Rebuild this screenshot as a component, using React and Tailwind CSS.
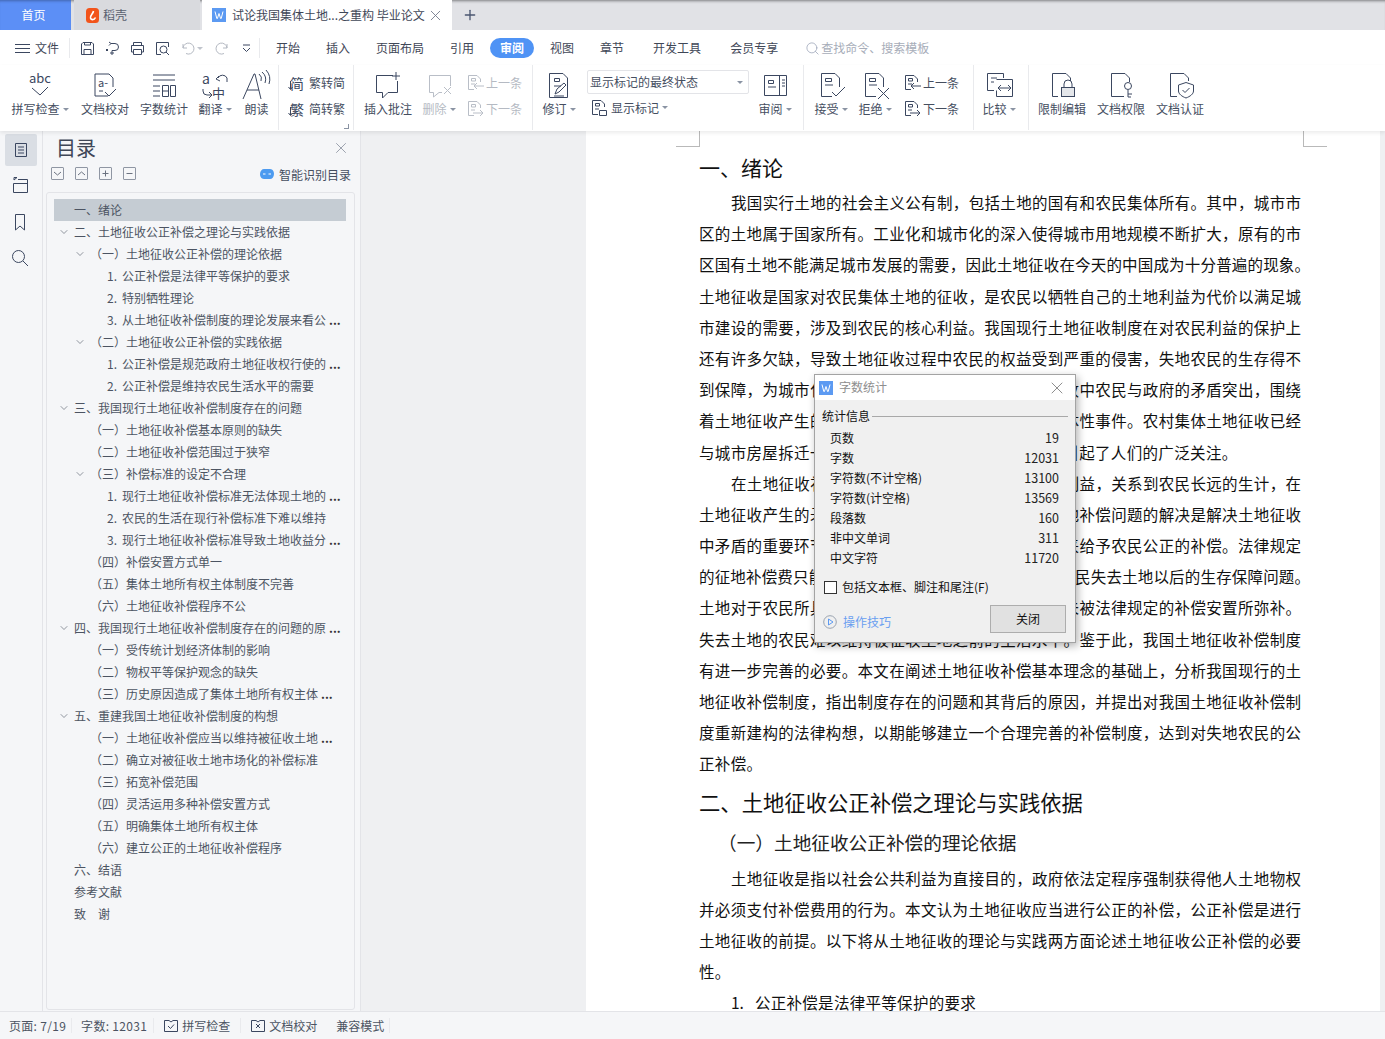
import { ChevronDown, X, Plus, Search } from "lucide-react";

const Svg = ({ w = 32, h = 32, className = "", children }) => (
  <svg width={w} height={h} viewBox={`0 0 ${w} ${h}`} fill="none" stroke="currentColor" strokeWidth="1" className={className}>
    {children}
  </svg>
);

const Caret = () => <span className="inline-block ml-[3px] mb-[2px] border-x-[3px] border-t-[3px] border-x-transparent border-t-[#8a93a3] align-middle" />;

const icons = {
  spell: (
    <Svg>
      <text x="16" y="14" textAnchor="middle" fontSize="13" fill="currentColor" stroke="none">abc</text>
      <path d="M8 19L16 26L24 18" />
    </Svg>
  ),
  proof: (
    <Svg>
      <path d="M19 27H6V5H20L24 9V18" />
      <text x="9" y="18" fontSize="11" fill="currentColor" stroke="none">a-</text>
      <path d="M10 22H14M16 23L20 27L27 20" />
    </Svg>
  ),
  count: (
    <Svg>
      <path d="M5 6H27M5 11H27M5 17H12M5 22H12M5 27H12" />
      <path d="M14.5 16.5H20.5V27.5H14.5ZM22.5 16.5H27.5V27.5H22.5ZM14.5 22H20.5" />
    </Svg>
  ),
  translate: (
    <Svg>
      <text x="3" y="15" fontSize="14" fill="currentColor" stroke="none">a</text>
      <text x="13" y="29" fontSize="13" fill="currentColor" stroke="none">中</text>
      <path d="M19 9A5 5 0 0 1 28 9V13M17 10L20 7M17 10L21 12" />
      <path d="M4 20V22A4 4 0 0 0 8 26H13M10 23L13 26L10 29" />
    </Svg>
  ),
  read: (
    <Svg>
      <path d="M2 30L13 5H14L20 30M6 21H18" />
      <path d="M18 5A6 6 0 0 1 20 12M21 3A10 10 0 0 1 24 14M25 1A14 14 0 0 1 28 15" />
    </Svg>
  ),
  comment: (
    <Svg>
      <path d="M21 6.5H4.5V23.5H10.5V29L16 23.5H25.5V12" />
      <path d="M24 3V11M20 7H28" />
    </Svg>
  ),
  del: (
    <Svg>
      <path d="M27.5 17V6.5H6.5V23.5H10.5V28L16 23.5H19" />
      <path d="M21 18L28 25M28 18L21 25" />
    </Svg>
  ),
  track: (
    <Svg>
      <path d="M24.5 28.5H6.5V4.5H20L24.5 9V28.5" />
      <path d="M11.5 9.5H16.5V12.5H11.5ZM11 17H18" />
      <path d="M12 25L14 20L21 14L23 16L16 23L12 25M11 27H21" />
    </Svg>
  ),
  review: (
    <Svg>
      <path d="M5.5 6.5H27.5V26.5H5.5ZM20.5 6.5V26.5" />
      <path d="M9.5 11.5H14.5V14.5H9.5ZM9 18H17M23 11H26M23 14H26M23 17H26" />
    </Svg>
  ),
  accept: (
    <Svg>
      <path d="M17 27.5H6.5V4.5H20L24.5 9V18" />
      <path d="M10.5 9.5H16.5V12.5H10.5ZM10 16H18" />
      <path d="M17 23L21 27L30 18" />
    </Svg>
  ),
  reject: (
    <Svg>
      <path d="M17 27.5H6.5V4.5H20L24.5 9V18" />
      <path d="M10.5 9.5H16.5V12.5H10.5ZM10 16H18" />
      <path d="M19 19L30 30M30 19L19 30" />
    </Svg>
  ),
  compare: (
    <Svg>
      <path d="M20.5 9V4.5H4.5V21.5H11M13.5 10.5H29.5V27.5H13.5V21.5" />
      <path d="M8 9H14M8 13H11" />
      <path d="M15 19H28M18 16L15 19L18 22M25 16L28 19L25 22" />
    </Svg>
  ),
  lock: (
    <Svg>
      <path d="M12 27.5H6.5V4.5H20L24.5 9V12" />
      <rect x="15.5" y="18.5" width="13" height="9" fill="#e4e6ea" />
      <path d="M18 18V15A4 4 0 0 1 26 15V18" />
    </Svg>
  ),
  key: (
    <Svg>
      <path d="M19 27.5H6.5V4.5H20L24.5 9V13" />
      <circle cx="23" cy="17" r="3.5" />
      <path d="M23 21V28M23 25H27M23 28H26" />
    </Svg>
  ),
  shield: (
    <Svg>
      <path d="M13 27.5H6.5V4.5H20L24.5 9V12" />
      <path d="M14.5 16L22 13.5L29.5 16V22C29.5 25 26 27.5 22 29C18 27.5 14.5 25 14.5 22Z" />
      <path d="M18.5 21L21 23.5L25.5 19" />
    </Svg>
  ),
};

const SmallDoc = ({ dir, mark = true }) => (
  <Svg w={18} h={18}>
    <path d="M7 15.5H1.5V1.5H10L13.5 5V8" />
    {mark && <path d="M4.5 4.5H8.5V7H4.5ZM4 10H8" />}
    {dir === "up" && <path d="M17 12H7M10 9L7 12L10 15" />}
    {dir === "down" && <path d="M6 13H16M13 10L16 13L13 16" />}
    {dir === "none" && <path d="M8.5 11.5H15.5V16.5H8.5Z" />}
  </Svg>
);

const RibbonBtn = ({ icon, label, caret, width, muted }) => (
  <div className={`flex flex-col items-center shrink-0 ${width} ${muted ? "text-[#b9bec7]" : "text-[#3b4760]"}`}>
    <div className="h-[36px] pt-[4px] flex justify-center">{icons[icon]}</div>
    <div className={`h-[16px] leading-[16px] text-[12px] whitespace-nowrap ${muted ? "text-[#b5bac3]" : "text-[#454e5f]"}`}>
      {label}
      {caret && <Caret />}
    </div>
  </div>
);

const StackBtn = ({ dir, label, muted }) => (
  <div className={`flex items-center h-[18px] text-[12px] ${muted ? "text-[#b9bec7]" : "text-[#3b4760]"}`}>
    <SmallDoc dir={dir} />
    <span className={`ml-[1px] ${muted ? "text-[#b5bac3]" : "text-[#454e5f]"}`}>{label}</span>
  </div>
);

const Sep = ({ className = "" }) => <div className={`w-px bg-[#e9eaed] self-stretch shrink-0 ${className}`} />;

function TabBar() {
  return (
    <div className="flex h-[30px] bg-[#e1e2e6] shadow-[inset_0_3px_3px_-2px_rgba(0,0,0,0.45)] text-[12px]">
      <div className="w-[71px] bg-[#5c8ff6] text-white flex items-center justify-center pr-[4px] shadow-[inset_0_3px_3px_-2px_rgba(0,0,0,0.3)]">首页</div>
      <div className="ml-[3px] w-[126px] bg-[#d9dade] flex items-center pl-[12px] text-[#5a6170]">
        <svg width="13" height="15" viewBox="0 0 13 15">
          <rect width="13" height="15" rx="3.5" fill="#f2541b" />
          <path d="M7.5 3C7 6 4 7 4.5 10C5 12 8 12.5 9.5 9.5" fill="none" stroke="#fff" strokeWidth="1.6" />
        </svg>
        <span className="ml-[4px]">稻壳</span>
      </div>
      <div className="ml-[2px] w-[250px] bg-white flex items-center pl-[10px]">
        <div className="w-[14px] h-[14px] bg-[#5c9af2] text-white flex items-center justify-center">
          <svg width="10" height="10" viewBox="0 0 10 10" fill="none" stroke="#fff" strokeWidth="1">
            <path d="M1 1.5L2.8 8.5H3.4L5 3.5L6.6 8.5H7.2L9 1.5" />
          </svg>
        </div>
        <span className="ml-[6px] text-[#3f4757] whitespace-nowrap">试论我国集体土地...之重构 毕业论文</span>
        <X size={17} strokeWidth={1.2} className="ml-[2px] text-[#6b7486]" />
      </div>
      <Plus size={16} strokeWidth={2} className="ml-[10px] mt-[7px] text-[#4a5670]" />
    </div>
  );
}

function MenuBar() {
  const gray = "text-[#b4b9c2]";
  return (
    <div className="flex items-center h-[35px] bg-white text-[12px] text-[#3f4757] pt-[1px]">
      <div className="ml-[15px] w-[15px] flex flex-col gap-[3px]">
        <span className="h-px bg-[#3b4760]" />
        <span className="h-px bg-[#3b4760]" />
        <span className="h-px bg-[#3b4760]" />
      </div>
      <span className="ml-[5px]">文件</span>
      <Sep className="ml-[10px] my-[7px]" />
      <div className="flex items-center ml-[10px] text-[#3b4760]">
        <Svg w={15} h={15}>
          <path d="M1.5 3L3 1.5H12L13.5 3V13.5H1.5ZM4 13.5V8.5H11V13.5M4.5 1.5V4H10.5V1.5" />
        </Svg>
        <Svg w={15} h={15} className="ml-[10px]">
          <path d="M6 2.5H10A3.5 3.5 0 0 1 10 9.5H7V14M4 1L6 2.5L4 4.5M1 8L3 10M3 8L1 10M5 12H9" />
        </Svg>
        <Svg w={15} h={15} className="ml-[10px]">
          <path d="M3.5 4.5V1.5H11.5V4.5M3.5 11H1.5V4.5H13.5V11H11.5M3.5 8.5H11.5V13.5H3.5Z" />
        </Svg>
        <Svg w={15} h={15} className="ml-[10px]">
          <path d="M6 13.5H1.5V1.5H13.5V6" />
          <circle cx="8.5" cy="8.5" r="3.5" />
          <path d="M11 11L14 14" />
        </Svg>
        <Svg w={13} h={13} className={`ml-[12px] ${gray}`}>
          <path d="M1 2V6H5M1 6A5.5 5.5 0 1 1 4 11.5" />
        </Svg>
        <span className="ml-[2px] mt-[1px] border-x-[3px] border-t-[3px] border-x-transparent border-t-[#c0c4cc]" />
        <Svg w={13} h={13} className={`ml-[12px] ${gray}`}>
          <path d="M12 2V6H8M12 6A5.5 5.5 0 1 0 9 11.5" />
        </Svg>
        <Svg w={9} h={9} className="ml-[14px]">
          <path d="M1 1H8M1 4L4.5 7.5L8 4" />
        </Svg>
      </div>
      <Sep className="ml-[8px] my-[7px]" />
      <span className="ml-[16px]">开始</span>
      <span className="ml-[26px]">插入</span>
      <span className="ml-[26px]">页面布局</span>
      <span className="ml-[26px]">引用</span>
      <span className="ml-[16px] w-[44px] h-[20px] rounded-full bg-[#4f93f5] text-white font-bold flex items-center justify-center">审阅</span>
      <span className="ml-[16px]">视图</span>
      <span className="ml-[26px]">章节</span>
      <span className="ml-[29px]">开发工具</span>
      <span className="ml-[29px]">会员专享</span>
      <Search size={15} strokeWidth={1.2} className="ml-[27px] text-[#98a2b5]" />
      <span className="ml-[1px] text-[#a7adb9]">查找命令、搜索模板</span>
    </div>
  );
}

// small character glyph with its little conversion arrow
const ConvertGlyph = ({ char }) => (
  <span className="relative w-[16px] h-[18px] text-[14px] leading-[18px] text-[#3b4760] text-right">
    {char}
    <svg width="5" height="10" viewBox="0 0 5 10" fill="none" stroke="currentColor" className="absolute left-0 bottom-[1px]">
      <path d="M2.5 0V8M0.5 6L2.5 8.5L4.5 6" />
    </svg>
  </span>
);

function Ribbon() {
  return (
    <div className="relative z-10 flex h-[66px] bg-white pl-[12px] pb-[1px] shadow-[0_2px_4px_rgba(0,0,0,0.08)]">
      <RibbonBtn icon="spell" label="拼写检查" caret width="w-[56px]" />
      <RibbonBtn icon="proof" label="文档校对" width="w-[48px] ml-[13px]" />
      <RibbonBtn icon="count" label="字数统计" width="w-[48px] ml-[11px]" />
      <RibbonBtn icon="translate" label="翻译" caret width="w-[32px] ml-[11px]" />
      <RibbonBtn icon="read" label="朗读" width="w-[23px] ml-[14px]" />
      <Sep className="ml-[10px]" />

      <div className="relative w-[74px] shrink-0 pl-[9px] pt-[9px] text-[12px] text-[#454e5f]">
        <div className="flex items-center h-[18px]">
          <ConvertGlyph char="简" />
          <span className="ml-[5px]">繁转简</span>
        </div>
        <div className="flex items-center h-[18px] mt-[8px]">
          <ConvertGlyph char="繁" />
          <span className="ml-[5px]">简转繁</span>
        </div>
        <span className="absolute right-[4px] bottom-[1px] w-[5px] h-[5px] border-r border-b border-[#8a93a3]" />
      </div>
      <Sep />

      <RibbonBtn icon="comment" label="插入批注" width="w-[48px] ml-[10px]" />
      <RibbonBtn icon="del" label="删除" caret muted width="w-[32px] ml-[11px]" />
      <div className="ml-[12px] pt-[9px] w-[65px] shrink-0 flex flex-col gap-[8px]">
        <StackBtn dir="up" label="上一条" muted />
        <StackBtn dir="down" label="下一条" muted />
      </div>
      <Sep />

      <RibbonBtn icon="track" label="修订" caret width="w-[32px] ml-[10px]" />
      <div className="ml-[12px] w-[162px] shrink-0 pt-[5px]">
        <div className="h-[24px] border border-[#e3e4e8] rounded-[2px] flex items-center justify-between pl-[2px] pr-[5px] text-[12px] text-[#454e5f]">
          显示标记的最终状态
          <span className="border-x-[3px] border-t-[3px] border-x-transparent border-t-[#8a93a3]" />
        </div>
        <div className="flex items-center mt-[5px] h-[18px] pl-[4px] text-[12px] text-[#454e5f]">
          <span className="text-[#3b4760]"><SmallDoc dir="none" /></span>
          <span className="ml-[2px]">显示标记</span>
          <Caret />
        </div>
      </div>
      <RibbonBtn icon="review" label="审阅" caret width="w-[32px] ml-[10px]" />
      <Sep className="ml-[12px]" />

      <RibbonBtn icon="accept" label="接受" caret width="w-[32px] ml-[11px]" />
      <RibbonBtn icon="reject" label="拒绝" caret width="w-[32px] ml-[12px]" />
      <div className="ml-[13px] pt-[9px] w-[69px] shrink-0 flex flex-col gap-[8px]">
        <StackBtn dir="up" label="上一条" />
        <StackBtn dir="down" label="下一条" />
      </div>
      <Sep />

      <RibbonBtn icon="compare" label="比较" caret width="w-[32px] ml-[9px]" />
      <Sep className="ml-[13px]" />
      <RibbonBtn icon="lock" label="限制编辑" width="w-[48px] ml-[9px]" />
      <RibbonBtn icon="key" label="文档权限" width="w-[48px] ml-[11px]" />
      <RibbonBtn icon="shield" label="文档认证" width="w-[48px] ml-[11px]" />
    </div>
  );
}

function Rail() {
  return (
    <div className="w-[43px] shrink-0 border-r border-[#e3e4e8] text-[#3b4760] flex flex-col pt-[3px] pl-[5px]">
      <div className="w-[32px] h-[32px] bg-[#dadee4] rounded-[2px] flex items-center justify-center">
        <Svg w={16} h={16}>
          <path d="M2.5 1.5H13.5V14.5H2.5ZM5 5H11M5 8H11M5 11H11" />
        </Svg>
      </div>
      <Svg w={20} h={20} className="ml-[5px] mt-[9px]">
        <path d="M4 2.5V5L7 2.5ZM8 4.5H17.5V17.5H3.5V8.5H17.5" />
      </Svg>
      <Svg w={20} h={20} className="ml-[5px] mt-[17px]">
        <path d="M5.5 2.5H14.5V18L10 14L5.5 18Z" />
      </Svg>
      <Svg w={20} h={20} className="ml-[5px] mt-[16px]">
        <circle cx="8.5" cy="8.5" r="6" />
        <path d="M13 13L18 18" />
      </Svg>
    </div>
  );
}

const outline = [
  [1, 0, "一、绪论"],
  [1, 1, "二、土地征收公正补偿之理论与实践依据"],
  [2, 1, "（一）土地征收公正补偿的理论依据"],
  [3, 0, "1. 公正补偿是法律平等保护的要求"],
  [3, 0, "2. 特别牺牲理论"],
  [3, 0, "3. 从土地征收补偿制度的理论发展来看公 ..."],
  [2, 1, "（二）土地征收公正补偿的实践依据"],
  [3, 0, "1. 公正补偿是规范政府土地征收权行使的 ..."],
  [3, 0, "2. 公正补偿是维持农民生活水平的需要"],
  [1, 1, "三、我国现行土地征收补偿制度存在的问题"],
  [2, 0, "（一）土地征收补偿基本原则的缺失"],
  [2, 0, "（二）土地征收补偿范围过于狭窄"],
  [2, 1, "（三）补偿标准的设定不合理"],
  [3, 0, "1. 现行土地征收补偿标准无法体现土地的 ..."],
  [3, 0, "2. 农民的生活在现行补偿标准下难以维持"],
  [3, 0, "3. 现行土地征收补偿标准导致土地收益分 ..."],
  [2, 0, "（四）补偿安置方式单一"],
  [2, 0, "（五）集体土地所有权主体制度不完善"],
  [2, 0, "（六）土地征收补偿程序不公"],
  [1, 1, "四、我国现行土地征收补偿制度存在的问题的原 ..."],
  [2, 0, "（一）受传统计划经济体制的影响"],
  [2, 0, "（二）物权平等保护观念的缺失"],
  [2, 0, "（三）历史原因造成了集体土地所有权主体 ..."],
  [1, 1, "五、重建我国土地征收补偿制度的构想"],
  [2, 0, "（一）土地征收补偿应当以维持被征收土地 ..."],
  [2, 0, "（二）确立对被征收土地市场化的补偿标准"],
  [2, 0, "（三）拓宽补偿范围"],
  [2, 0, "（四）灵活运用多种补偿安置方式"],
  [2, 0, "（五）明确集体土地所有权主体"],
  [2, 0, "（六）建立公正的土地征收补偿程序"],
  [1, 0, "六、结语"],
  [1, 0, "参考文献"],
  [1, 0, "致\u3000谢"],
];

const levelPad = { 1: "pl-[4px]", 2: "pl-[20px]", 3: "pl-[53px]" };

function OutlineText({ level, text }) {
  const cut = text.endsWith(" ...");
  const body = cut ? text.slice(0, -4) : text;
  return (
    <>
      {level === 3 ? (
        <>
          <span className="w-[15px]">{body.slice(0, 2)}</span>
          <span>{body.slice(3)}</span>
        </>
      ) : (
        <span>{body}</span>
      )}
      {cut && <span className="ml-[3px] font-bold text-[#333]">...</span>}
    </>
  );
}

function OutlinePanel() {
  return (
    <div className="w-[318px] shrink-0 border-r border-[#e3e4e8] flex flex-col pl-[3px] pr-[5px]">
      <div className="flex items-center h-[28px] pl-[10px] pr-[5px] pt-[6px] justify-between">
        <span className="text-[20px] text-[#3f4757]">目录</span>
        <X size={18} strokeWidth={1} className="text-[#7d8696]" />
      </div>
      <div className="flex items-start h-[33px] pl-[5px] pr-[4px] pt-[8px] text-[12px] text-[#454e5f]">
        {["down", "up", "plus", "minus"].map((k) => (
          <span key={k} className="w-[13px] h-[13px] mr-[11px] border border-[#8f96a3] rounded-[1px]">
            <Svg w={11} h={11} className="text-[#6b7280]">
              {k === "down" && <path d="M2 4L5.5 7L9 4" />}
              {k === "up" && <path d="M2 7L5.5 4L9 7" />}
              {k === "plus" && <path d="M2.5 5.5H8.5M5.5 2.5V8.5" />}
              {k === "minus" && <path d="M2.5 5.5H8.5" />}
            </Svg>
          </span>
        ))}
        <svg width="14" height="12" viewBox="0 0 14 12" className="ml-auto mt-[1px]">
          <path d="M4 1H10C13 1 14 4 14 6C14 9 12 11 10 11H4C1 11 0 8 0 6C0 3 2 1 4 1Z" fill="#4d9bf0" />
          <path d="M3 6H5.5M8.5 6H11" stroke="#fff" strokeWidth="1" />
        </svg>
        <span className="ml-[5px] -mt-[1px]">智能识别目录</span>
      </div>
      <div className="flex-1 min-h-0 border border-[#e3e4e8] rounded-[3px] pl-[7px] pr-[8px] pt-[6px] mb-[1px] text-[12px] text-[#4c5462]">
        {outline.map(([level, open, text], i) => (
          <div key={i} className={`flex items-center h-[22px] whitespace-nowrap ${levelPad[level]} ${i === 0 ? "bg-[#c5ccd3]" : ""}`}>
            {level < 3 && (
              <span className="w-[12px] mr-[4px] flex justify-center">
                {open === 1 && <ChevronDown size={12} strokeWidth={1.2} className="text-[#4c5462]" />}
              </span>
            )}
            <OutlineText level={level} text={text} />
          </div>
        ))}
      </div>
    </div>
  );
}

const intro = [
  ["我国实行土地的社会主义公有制，包括土地的国有和农民集体所有。其中，城市市", "i"],
  ["区的土地属于国家所有。工业化和城市化的深入使得城市用地规模不断扩大，原有的市"],
  ["区国有土地不能满足城市发展的需要，因此土地征收在今天的中国成为十分普遍的现象。", "h"],
  ["土地征收是国家对农民集体土地的征收，是农民以牺牲自己的土地利益为代价以满足城"],
  ["市建设的需要，涉及到农民的核心利益。我国现行土地征收制度在对农民利益的保护上"],
  ["还有许多欠缺，导致土地征收过程中农民的权益受到严重的侵害，失地农民的生存得不"],
  ["到保障，为城市化建设付出了巨大的代价，因土地征收中农民与政府的矛盾突出，围绕"],
  ["着土地征收产生的矛盾已引发了数十起影响较大的群体性事件。农村集体土地征收已经"],
  ["与城市房屋拆迁一起成为当前社会矛盾的焦点，并已引起了人们的广泛关注。", "l"],
  ["在土地征收补偿制度中，公正补偿是农民的切身利益，关系到农民长远的生计，在", "i"],
  ["土地征收产生的矛盾主要来源于补偿问题，因此，征地补偿问题的解决是解决土地征收"],
  ["中矛盾的重要环节，政府应当依据法律的相关规定，来给予农民公正的补偿。法律规定"],
  ["的征地补偿费只能弥补短期的损失，却无法解决广大农民失去土地以后的生存保障问题。", "h"],
  ["土地对于农民所具有的生存保障功能及其价值，却并未被法律规定的补偿安置所弥补。"],
  ["失去土地的农民难以维持被征收土地之前的生活水平。鉴于此，我国土地征收补偿制度"],
  ["有进一步完善的必要。本文在阐述土地征收补偿基本理念的基础上，分析我国现行的土"],
  ["地征收补偿制度，指出制度存在的问题和其背后的原因，并提出对我国土地征收补偿制"],
  ["度重新建构的法律构想，以期能够建立一个合理完善的补偿制度，达到对失地农民的公"],
  ["正补偿。", "l"],
];

const theory = [
  ["土地征收是指以社会公共利益为直接目的，政府依法定程序强制获得他人土地物权", "i"],
  ["并必须支付补偿费用的行为。本文认为土地征收应当进行公正的补偿，公正补偿是进行"],
  ["土地征收的前提。以下将从土地征收的理论与实践两方面论述土地征收公正补偿的必要"],
  ["性。", "l"],
];

const lineKind = {
  i: "pl-[32px] w-[602px] text-justify [text-align-last:justify]",
  h: "w-[611px] text-justify [text-align-last:justify]",
  l: "tracking-[0.34px]",
};

const Lines = ({ items }) =>
  items.map(([text, kind], i) => (
    <div key={i} className={`h-[31.2px] leading-[31.2px] text-[15.5px] whitespace-nowrap ${lineKind[kind] || "w-[602px] text-justify [text-align-last:justify]"}`}>
      {text}
    </div>
  ));

function Page() {
  return (
    <div className="flex-1 min-w-0 flex bg-[#eff0f2] pl-[225px] overflow-hidden">
      <div className="w-[794px] shrink-0 bg-white pl-[113px] text-[#111] relative">
        <div className="absolute left-[90px] top-0 w-[24px] h-[16px] border-r border-b border-[#b9b9b9]" />
        <div className="absolute left-[717px] top-0 w-[24px] h-[16px] border-l border-b border-[#b9b9b9]" />
        <div className="h-[56px] pt-[22px] leading-[28px] text-[21px]">一、绪论</div>
        <Lines items={intro} />
        <div className="h-[40px] mt-[2px] leading-[40px] text-[21.33px]">二、土地征收公正补偿之理论与实践依据</div>
        <div className="h-[40px] mt-0 pl-[19px] leading-[40px] text-[18.67px] text-[#222]">（一）土地征收公正补偿的理论依据</div>
        <div className="mt-[1px]">
          <Lines items={theory} />
        </div>
        <div className="h-[31px] leading-[31px] text-[15.5px] pl-[32px] whitespace-nowrap">
          1.<span className="ml-[11px] tracking-[0.3px]">公正补偿是法律平等保护的要求</span>
        </div>
      </div>
    </div>
  );
}

const stats = [
  ["页数", "19"],
  ["字数", "12031"],
  ["字符数(不计空格)", "13100"],
  ["字符数(计空格)", "13569"],
  ["段落数", "160"],
  ["非中文单词", "311"],
  ["中文字符", "11720"],
];

function WordCountDialog() {
  return (
    <div className="absolute left-[814px] top-[374px] w-[262px] h-[269px] z-20 bg-[#f0f0f0] border border-[#a3a3a3] shadow-[2px_3px_8px_rgba(0,0,0,0.3)] text-[12px] text-[#111] flex flex-col">
      <div className="h-[25px] bg-white flex items-center pl-[4px] pr-[8px]">
        <div className="w-[14px] h-[14px] bg-[#5c9af2] flex items-center justify-center">
          <svg width="10" height="10" viewBox="0 0 10 10" fill="none" stroke="#fff" strokeWidth="1">
            <path d="M1 1.5L2.8 8.5H3.4L5 3.5L6.6 8.5H7.2L9 1.5" />
          </svg>
        </div>
        <span className="ml-[6px] -mt-[2px] text-[#8e8e8e]">字数统计</span>
        <X size={20} strokeWidth={1} className="ml-auto text-[#777]" />
      </div>
      <div className="flex items-center mt-[8px] h-[16px] pl-[7px] pr-[7px]">
        <span>统计信息</span>
        <span className="flex-1 h-px bg-[#a8a8a8] ml-[2px]" />
      </div>
      <div className="mt-[4px] pl-[15px] pr-[16px]">
        {stats.map(([k, v]) => (
          <div key={k} className="flex justify-between items-center h-[20px]">
            <span>{k}</span>
            <span className="text-[12.5px] text-[#222]">{v}</span>
          </div>
        ))}
      </div>
      <div className="flex items-center mt-[11px] h-[16px] pl-[9px]">
        <span className="w-[13px] h-[13px] bg-white border border-[#333]" />
        <span className="ml-[5px]">包括文本框、脚注和尾注(F)</span>
      </div>
      <div className="flex mt-[10px] pl-[8px] pr-[9px] justify-between">
        <div className="flex items-center mt-[3px] h-[28px] text-[#6a9ff0]">
          <svg width="14" height="14" viewBox="0 0 14 14" fill="none">
            <circle cx="7" cy="7" r="6.3" stroke="#9aa3b0" />
            <path d="M5.5 4L10 7L5.5 10Z" stroke="#5c9af2" />
          </svg>
          <span className="ml-[6px]">操作技巧</span>
        </div>
        <div className="w-[76px] h-[28px] bg-[#e1e1e1] border border-[#adadad] flex items-center justify-center">关闭</div>
      </div>
    </div>
  );
}

function StatusBar() {
  return (
    <div className="flex items-center h-[28px] bg-[#f5f6f8] border-t border-[#e3e4e8] text-[12px] text-[#4c5462] pl-[9px]">
      <span className="tracking-[0.3px]">页面: 7/19</span>
      <Sep className="ml-[5px] my-[6px]" />
      <span className="ml-[9px] tracking-[0.3px]">字数: 12031</span>
      <Sep className="ml-[6px] my-[6px]" />
      <Svg w={16} h={14} className="ml-[9px] text-[#3b4760]">
        <path d="M1.5 1.5H6L8 3L10 1.5H14.5V12.5H1.5ZM5 7L7.5 9.5L11 5.5" />
      </Svg>
      <span className="ml-[3px]">拼写检查</span>
      <Sep className="ml-[10px] my-[6px]" />
      <Svg w={16} h={14} className="ml-[9px] text-[#3b4760]">
        <path d="M1.5 1.5H6L8 3L10 1.5H14.5V12.5H1.5ZM6 5L10 9M10 5L6 9" />
      </Svg>
      <span className="ml-[3px]">文档校对</span>
      <span className="ml-[19px]">兼容模式</span>
      <Sep className="ml-[5px] my-[6px]" />
    </div>
  );
}

export default function App() {
  return (
    <div lang="zh-CN" className="relative w-[1385px] h-[1039px] overflow-hidden flex flex-col bg-[#f5f6f8] font-['Noto_Sans_CJK_SC','Microsoft_YaHei',sans-serif]">
      <TabBar />
      <MenuBar />
      <Ribbon />
      <div className="flex flex-1 min-h-0">
        <Rail />
        <OutlinePanel />
        <Page />
      </div>
      <StatusBar />
      <WordCountDialog />
    </div>
  );
}
